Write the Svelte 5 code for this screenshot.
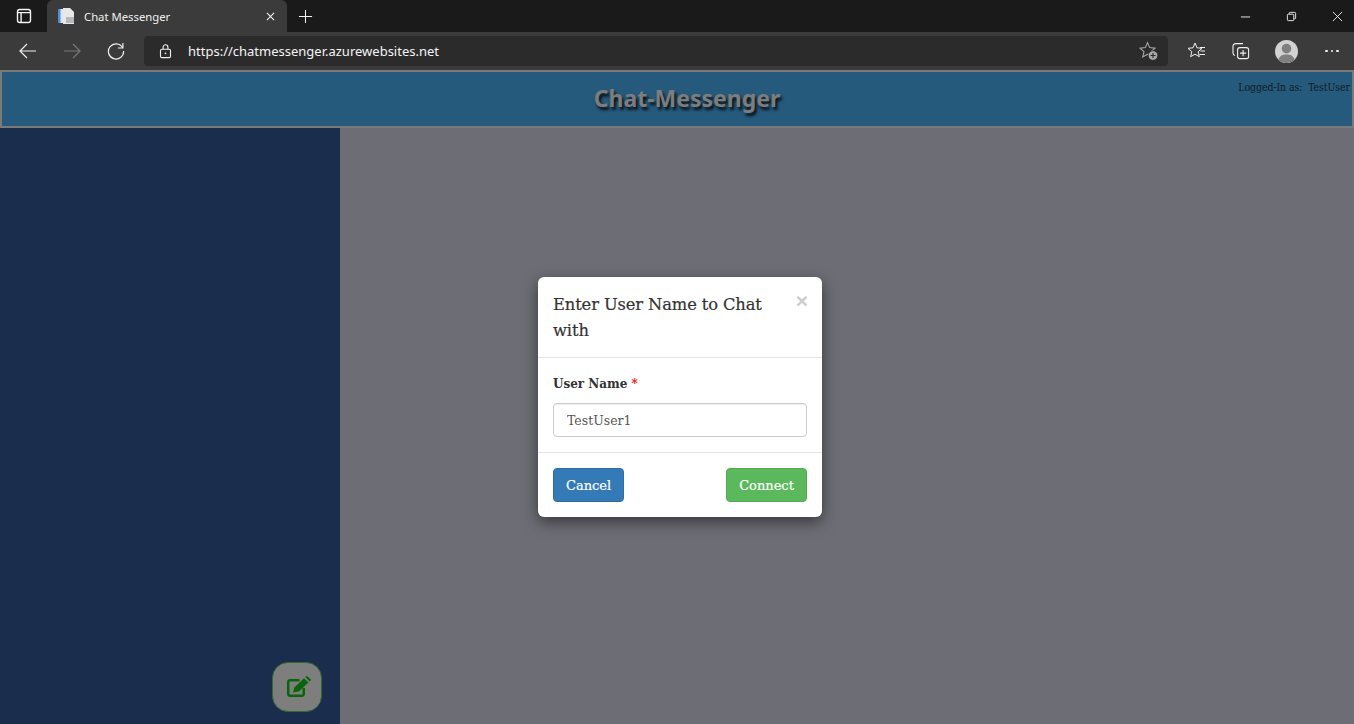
<script>
    let userName = $state("TestUser1");
</script>

<div class="window">
    <div class="tabstrip">
        <button class="tab-actions" aria-label="Tab actions">
            <svg viewBox="0 0 16 16" fill="none" stroke="currentColor" stroke-width="1.4">
                <rect x="1.500" y="1.500" width="13" height="13" rx="2.200"></rect>
                <path d="M1.500 4.600h13M5.100 4.600v9.900"></path>
            </svg>
        </button>
        <div class="tab">
            <svg class="favicon" viewBox="0 0 16 16">
                <path d="M0 1h7v14H0z" fill="#d8e6f4"></path>
                <path d="M0 1h2.500v14H0z" fill="#4a90d0"></path>
                <path d="M5 0h7l4 4v12H5z" fill="#e8e8e8"></path>
                <path d="M8 9h8v6H8z" fill="#b8b8bc"></path>
            </svg>
            <span class="tab-title">Chat Messenger</span>
            <svg class="tab-close" viewBox="0 0 10 10" stroke="currentColor" stroke-width="1.200">
                <path d="M1 1l8 8M9 1l-8 8"></path>
            </svg>
        </div>
        <button class="new-tab" aria-label="New tab">
            <svg viewBox="0 0 16 16" stroke="currentColor" stroke-width="1.100">
                <path d="M8 1v14M1 8h14"></path>
            </svg>
        </button>
        <div class="window-controls">
            <svg viewBox="0 0 12 12" stroke="currentColor" stroke-width="1"><path d="M1 6.500h10"></path></svg>
            <svg viewBox="0 0 12 12" fill="none" stroke="currentColor" stroke-width="1">
                <rect x="1.500" y="3.500" width="7" height="7" rx="1"></rect>
                <path d="M3.500 3.500v-1a1 1 0 0 1 1-1h5a1 1 0 0 1 1 1v5a1 1 0 0 1-1 1h-1"></path>
            </svg>
            <svg viewBox="0 0 12 12" stroke="currentColor" stroke-width="1"><path d="M1 1l10 10M11 1L1 11"></path></svg>
        </div>
    </div>

    <div class="toolbar">
        <svg class="nav" viewBox="0 0 18 18" fill="none" stroke="currentColor" stroke-width="1.200">
            <path d="M1 9h16M8 2L1 9l7 7"></path>
        </svg>
        <svg class="nav disabled" viewBox="0 0 18 18" fill="none" stroke="currentColor" stroke-width="1.200">
            <path d="M17 9H1M10 2l7 7-7 7"></path>
        </svg>
        <svg class="nav" viewBox="0 0 18 18" fill="none" stroke="currentColor" stroke-width="1.200">
            <path d="M15.600 5.600A7.600 7.600 0 1 0 16.600 9"></path>
            <path d="M15.900 1v5h-5"></path>
        </svg>
        <div class="address">
            <svg class="lock" viewBox="0 0 14 16" fill="none" stroke="currentColor" stroke-width="1.200">
                <rect x="1.600" y="5.600" width="10.800" height="9" rx="1.600"></rect>
                <path d="M4.400 5.600V3.400a2.600 2.600 0 0 1 5.200 0v2.200"></path>
                <circle cx="7" cy="10" r="0.900" fill="currentColor" stroke="none"></circle>
            </svg>
            <span class="url">https://chatmessenger.azurewebsites.net</span>
            <svg class="fav-add" viewBox="0 0 20 20" fill="none" stroke="#a8a8a8" stroke-width="1.100">
                <path d="M8.500 1.600l2.200 5 5.300.5-4 3.600 1.200 5.200-4.700-2.700-4.700 2.700 1.200-5.200-4-3.600 5.300-.5z"></path>
                <circle cx="14" cy="14.500" r="4.800" fill="#a8a8a8" stroke="#2b2b2b" stroke-width="0.800"></circle>
                <path d="M14 12v5M11.500 14.500h5" stroke="#2b2b2b"></path>
            </svg>
        </div>
        <svg class="tool favs" viewBox="0 0 20 20" fill="none" stroke="currentColor" stroke-width="1">
            <path d="M8 2l2 4.800 5 .5-3.800 3.400 1.100 5L8 13.200l-4.300 2.500 1.100-5L1 7.300l5-.5z"></path>
            <path d="M13 6.500h5M13.500 10h4.500M12.500 13.500h5.500"></path>
        </svg>
        <svg class="tool collections" viewBox="0 0 20 20" fill="none" stroke="currentColor" stroke-width="1.100">
            <path d="M12 2.600H5a3 3 0 0 0-3 3v6.500a2.500 2.500 0 0 0 2 2.400"></path>
            <rect x="6.600" y="6.600" width="11" height="11" rx="2.200"></rect>
            <path d="M12.100 9v6.200M9 12.100h6.200"></path>
        </svg>
        <div class="avatar">
            <svg viewBox="0 0 24 24">
                <circle cx="12" cy="12" r="12" fill="#d2d2d2"></circle>
                <circle cx="12" cy="9" r="5" fill="#7f7f7f"></circle>
                <path d="M3.500 20.500C5 16.500 8 15.200 12 15.200s7 1.300 8.500 5.300A12 12 0 0 1 3.500 20.500z" fill="#7f7f7f"></path>
            </svg>
        </div>
        <div class="more"><i></i><i></i><i></i></div>
    </div>

    <div class="page">
        <header class="app-header">
            <h1>Chat-Messenger</h1>
            <div class="logged-in">Logged-In as:&nbsp; TestUser</div>
        </header>
        <div class="app-body">
            <aside class="sidebar">
                <button class="compose" aria-label="New chat">
                    <svg viewBox="0 0 24 24" fill="none">
                        <path d="M16.750 13v6a1.750 1.750 0 0 1-1.750 1.750H3A1.750 1.750 0 0 1 1.250 19V7A1.750 1.750 0 0 1 3 5.250h9.500" stroke="currentColor" stroke-width="2.500"></path>
                        <path d="M6 17.500l1.300-5L17 3.200l4.500 4.300-9.700 9.100zM18.300 2l1-.7q.6-.3 1.100 0l3.200 3q.5.500 0 1.100l-.9 1z" fill="currentColor"></path>
                    </svg>
                </button>
            </aside>
            <main class="content"></main>
        </div>

        <div class="backdrop">
            <div class="modal">
                <div class="modal-header">
                    <h2>Enter User Name to Chat with</h2>
                    <span class="close">×</span>
                </div>
                <div class="modal-body">
                    <label for="user-name">User Name <span class="req">*</span></label>
                    <input id="user-name" type="text" bind:value={userName} />
                </div>
                <div class="modal-footer">
                    <button class="btn cancel">Cancel</button>
                    <button class="btn connect">Connect</button>
                </div>
            </div>
        </div>
    </div>
</div>

<style>
    :global(body) {
        margin: 0;
        background: #1a1a1a;
    }

    .window {
        height: 724px;
        display: flex;
        flex-direction: column;
        overflow: hidden;
        font-family: "Noto Sans", "Open Sans", sans-serif;
    }

    button {
        background: none;
        border: none;
        padding: 0;
        color: inherit;
    }

    svg {
        display: block;
    }

    /* Browser tab strip */
    .tabstrip {
        height: 32px;
        flex: none;
        display: flex;
        align-items: stretch;
        background: #1a1a1a;
        color: #f4f4f4;
    }

    .tab-actions {
        width: 47px;
        display: flex;
        align-items: center;
        justify-content: center;
    }

    .tab-actions svg {
        width: 16px;
        height: 16px;
    }

    .tab {
        width: 240px;
        display: flex;
        align-items: center;
        background: #3b3b3b;
        border-radius: 6px 6px 0 0;
        padding: 0 12px 0 11px;
        box-sizing: border-box;
    }

    .favicon {
        width: 16px;
        height: 16px;
        margin-right: 10px;
    }

    .tab-title {
        flex: 1;
        font-size: 11.300px;
        color: #f0f0f0;
    }

    .tab-close {
        width: 9px;
        height: 9px;
    }

    .new-tab {
        width: 36px;
        display: flex;
        align-items: center;
        justify-content: center;
    }

    .new-tab svg {
        width: 15px;
        height: 15px;
    }

    .window-controls {
        margin-left: auto;
        display: flex;
        align-items: center;
        gap: 35px;
        padding-right: 11px;
    }

    .window-controls svg {
        width: 11px;
        height: 11px;
    }

    /* Browser toolbar */
    .toolbar {
        height: 38px;
        flex: none;
        display: flex;
        align-items: center;
        background: #3b3b3b;
        color: #f0f0f0;
        padding: 0 14px 0 19px;
        box-sizing: border-box;
    }

    .nav {
        width: 18px;
        height: 18px;
        margin-right: 26px;
    }

    .nav.disabled {
        color: #787878;
    }

    .nav:nth-child(3) {
        margin-right: 19px;
    }

    .address {
        width: 1024px;
        height: 30px;
        flex: none;
        display: flex;
        align-items: center;
        background: #2b2b2b;
        border-radius: 4px;
        padding: 0 9px 0 15px;
        box-sizing: border-box;
    }

    .lock {
        width: 13px;
        height: 15px;
        margin-right: 16px;
    }

    .url {
        flex: 1;
        font-size: 13px;
        color: #f4f4f4;
    }

    .fav-add {
        width: 20px;
        height: 20px;
    }

    .tool {
        width: 20px;
        height: 20px;
        flex: none;
    }

    .favs {
        margin-left: 19px;
    }

    .collections {
        margin-left: 24px;
    }

    .avatar {
        width: 23px;
        height: 23px;
        margin-left: 24px;
        flex: none;
    }

    .more {
        display: flex;
        gap: 3px;
        margin-left: 27px;
    }

    .more i {
        width: 2.500px;
        height: 2.500px;
        border-radius: 50%;
        background: #f0f0f0;
    }

    /* Page */
    .page {
        flex: 1;
        min-height: 0;
        position: relative;
        display: flex;
        flex-direction: column;
    }

    .app-header {
        height: 58px;
        flex: none;
        box-sizing: border-box;
        position: relative;
        display: flex;
        align-items: center;
        justify-content: center;
        padding: 0 0 3px 20px;
        background: #265a7c;
        border: 2px solid #7a7a7a;
    }

    h1 {
        margin: 0;
        font-family: "Noto Sans", "Open Sans", sans-serif;
        font-size: 23px;
        font-weight: 700;
        color: #7d7d7d;
        text-shadow: 2px 3px 3px #060e14;
    }

    .logged-in {
        position: absolute;
        top: 9px;
        right: 2px;
        font-family: "DejaVu Serif Condensed", "DejaVu Serif", serif;
        font-stretch: condensed;
        font-size: 10.500px;
        letter-spacing: -0.1px;
        color: #101a22;
    }

    .app-body {
        flex: 1;
        min-height: 0;
        display: flex;
    }

    .sidebar {
        width: 340px;
        flex: none;
        position: relative;
        background: #1a2d4d;
    }

    .compose {
        position: absolute;
        left: 272px;
        bottom: 12px;
        width: 50px;
        height: 50px;
        box-sizing: border-box;
        display: flex;
        align-items: center;
        justify-content: center;
        background: #7e7e7e;
        border: 1px solid #2f6b2f;
        border-radius: 16px;
        color: #086608;
    }

    .compose svg {
        width: 24px;
        height: 24px;
        margin-left: 4px;
    }

    .content {
        flex: 1;
        background: #6d6d75;
    }

    /* Dialog */
    .backdrop {
        position: absolute;
        inset: 0;
        display: flex;
        align-items: center;
        justify-content: center;
        padding-left: 6px;
    }

    .modal {
        width: 284px;
        box-sizing: border-box;
        background: #fff;
        border-radius: 6px;
        box-shadow: 0 5px 15px rgba(0, 0, 0, 0.5);
        font-family: "DejaVu Serif", serif;
        color: #333;
    }

    .modal-header {
        height: 81px;
        box-sizing: border-box;
        padding: 15px;
        position: relative;
        border-bottom: 1px solid #e5e5e5;
    }

    h2 {
        margin: 0;
        width: 225px;
        font-size: 16.300px;
        font-weight: 400;
        line-height: 26px;
        letter-spacing: -0.1px;
        -webkit-text-stroke: 0.2px #333;
    }

    .close {
        position: absolute;
        top: 13px;
        right: 14px;
        font-family: "Liberation Sans", sans-serif;
        font-size: 21px;
        font-weight: 700;
        line-height: 1;
        color: #ccc;
    }

    .modal-body {
        height: 94px;
        box-sizing: border-box;
        padding: 16px 15px 15px;
        display: flex;
        flex-direction: column;
    }

    label {
        font-size: 12px;
        font-weight: 700;
        line-height: 20px;
        margin-bottom: 9px;
    }

    .req {
        color: #f01010;
    }

    input {
        height: 34px;
        box-sizing: border-box;
        padding: 6px 13px;
        border: 1px solid #ccc;
        border-radius: 4px;
        font-family: "DejaVu Serif", serif;
        font-size: 12.500px;
        font-weight: 300;
        color: #555;
        outline: none;
        box-shadow: inset 0 1px 1px rgba(0, 0, 0, 0.075);
    }

    .modal-footer {
        height: 65px;
        box-sizing: border-box;
        padding: 15px;
        display: flex;
        justify-content: space-between;
        border-top: 1px solid #e5e5e5;
    }

    .btn {
        height: 34px;
        box-sizing: border-box;
        padding: 0 12px;
        border: 1px solid;
        border-radius: 4px;
        font-family: "DejaVu Serif", serif;
        font-size: 13px;
        color: #fff;
        -webkit-text-stroke: 0.2px #fff;
    }

    .cancel {
        width: 71px;
        background: #337ab7;
        border-color: #2e6da4;
    }

    .connect {
        width: 81px;
        background: #5cb85c;
        border-color: #4cae4c;
    }
</style>
